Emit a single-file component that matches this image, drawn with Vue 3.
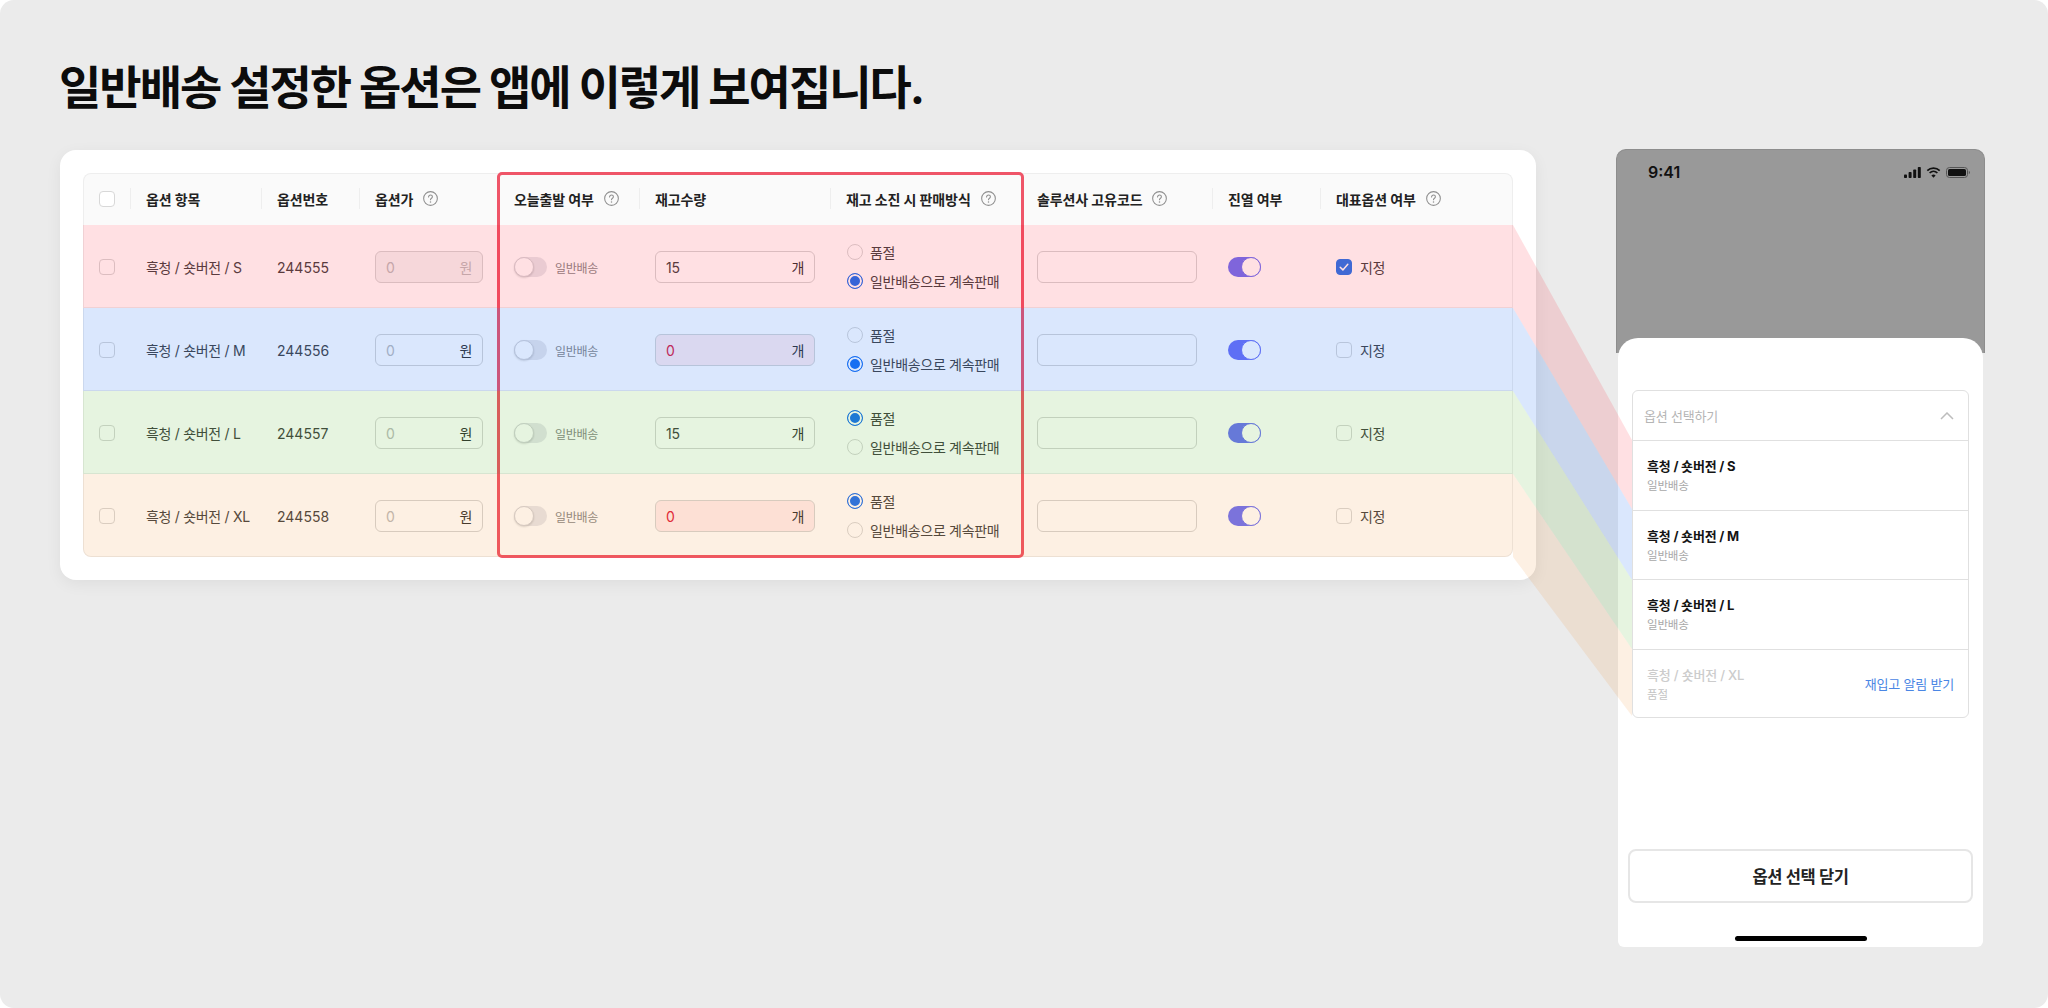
<script setup>
const rows = [
  { tint: "red", name: "흑청 / 숏버전 / S", code: "244555", priceOff: true, stock: "15", soldOut: false, main: true },
  { tint: "blue", name: "흑청 / 숏버전 / M", code: "244556", priceOff: false, stock: "0", soldOut: false, main: false },
  { tint: "green", name: "흑청 / 숏버전 / L", code: "244557", priceOff: false, stock: "15", soldOut: true, main: false },
  { tint: "orange", name: "흑청 / 숏버전 / XL", code: "244558", priceOff: false, stock: "0", soldOut: true, main: false },
]

const columns = [
  { label: "옵션 항목" },
  { label: "옵션번호" },
  { label: "옵션가", help: true },
  { label: "오늘출발 여부", help: true },
  { label: "재고수량" },
  { label: "재고 소진 시 판매방식", help: true },
  { label: "솔루션사 고유코드", help: true },
  { label: "진열 여부" },
  { label: "대표옵션 여부", help: true },
]

const items = [
  { name: "흑청 / 숏버전 / S", note: "일반배송" },
  { name: "흑청 / 숏버전 / M", note: "일반배송" },
  { name: "흑청 / 숏버전 / L", note: "일반배송" },
  { name: "흑청 / 숏버전 / XL", note: "품절", off: true },
]

const bands = [
  { points: "1513,225 1632,440 1632,509 1513,308", fill: "rgba(255,0,25,.12)" },
  { points: "1513,308 1632,509 1632,580 1513,391", fill: "rgba(8,95,242,.15)" },
  { points: "1513,391 1632,580 1632,649 1513,474", fill: "rgba(47,163,0,.12)" },
  { points: "1513,474 1632,649 1632,716 1513,557", fill: "rgba(237,119,0,.11)" },
]
</script>

<template>
  <div class="page">
    <h1 class="title">일반배송 설정한 옵션은 앱에 이렇게 보여집니다.</h1>

    <div class="content">
      <section class="card">
        <div class="table">
          <div class="highlight"></div>

          <div class="grid head">
            <div class="cell check-cell">
              <span class="checkbox"></span>
            </div>
            <div v-for="col in columns" :key="col.label" class="cell head-cell">
              {{ col.label }}
              <svg v-if="col.help" class="help" width="15" height="15" viewBox="0 0 14 14" fill="none">
                <circle cx="7" cy="7" r="6.4" stroke="#8f8f8f" />
                <path d="M5.2 5.5c0-1 .8-1.7 1.8-1.7s1.8.7 1.8 1.6c0 1.300-1.800 1.400-1.800 2.800" stroke="#8f8f8f" stroke-linecap="round" />
                <circle cx="7" cy="10.200" r=".7" fill="#8f8f8f" />
              </svg>
            </div>
          </div>

          <div v-for="row in rows" :key="row.code" class="grid row" :class="row.tint">
            <div class="cell check-cell">
              <span class="checkbox"></span>
            </div>
            <div class="cell">{{ row.name }}</div>
            <div class="cell code">{{ row.code }}</div>
            <div class="cell">
              <div class="field price" :class="{ disabled: row.priceOff }">
                <span class="placeholder">0</span>
                <span class="unit">원</span>
              </div>
            </div>
            <div class="cell">
              <span class="switch"><span class="knob"></span></span>
              <span class="switch-label">일반배송</span>
            </div>
            <div class="cell">
              <div class="field stock" :class="{ empty: row.stock === '0' }">
                <span class="value">{{ row.stock }}</span>
                <span class="unit">개</span>
              </div>
            </div>
            <div class="cell radios">
              <label class="radio-line">
                <span class="radio" :class="{ on: row.soldOut }"></span>품절
              </label>
              <label class="radio-line">
                <span class="radio" :class="{ on: !row.soldOut }"></span>일반배송으로 계속판매
              </label>
            </div>
            <div class="cell">
              <div class="field stock"></div>
            </div>
            <div class="cell">
              <span class="switch on"><span class="knob"></span></span>
            </div>
            <div class="cell">
              <span class="checkbox" :class="{ on: row.main }">
                <svg v-if="row.main" width="12" height="12" viewBox="0 0 12 12" fill="none">
                  <path d="M2.200 6.200 4.900 8.900 9.800 3.300" stroke="#fff" stroke-width="1.500" stroke-linecap="round" stroke-linejoin="round" />
                </svg>
              </span>
              <span class="assign">지정</span>
            </div>
          </div>
        </div>
      </section>

      <section class="phone">
        <div class="dim">
          <div class="status">
            <span class="time">9:41</span>
            <div class="status-icons">
              <svg width="17" height="11" viewBox="0 0 17 11" fill="#111">
                <rect x="0" y="7.500" width="3" height="3.500" rx=".8" />
                <rect x="4.600" y="5" width="3" height="6" rx=".8" />
                <rect x="9.200" y="2.500" width="3" height="8.500" rx=".8" />
                <rect x="13.800" y="0" width="3" height="11" rx=".8" />
              </svg>
              <svg width="15" height="11" viewBox="0 0 14 11" fill="none" stroke="#111" stroke-width="1.700">
                <path d="M.8 3.700a9 9 0 0 1 12.400 0" />
                <path d="M3.100 6a5.700 5.700 0 0 1 7.800 0" />
                <path d="M7 10.800 4.900 8.400a3.200 3.200 0 0 1 4.200 0Z" fill="#111" stroke="none" />
              </svg>
              <svg width="24" height="11" viewBox="0 0 24 11" fill="none">
                <rect x=".5" y=".5" width="21" height="10" rx="3" stroke="#555" />
                <rect x="2" y="2" width="18" height="7" rx="1.600" fill="#111" />
                <path d="M22.800 3.800c.7.300 1.100.9 1.100 1.700s-.4 1.400-1.100 1.700Z" fill="#555" />
              </svg>
            </div>
          </div>
        </div>

        <div class="sheet">
          <div class="select">
            <div class="select-head">
              <span>옵션 선택하기</span>
              <svg width="14" height="8" viewBox="0 0 14 8" fill="none">
                <path d="M1 7 7 1l6 6" stroke="#bdbdbd" stroke-width="1.500" />
              </svg>
            </div>
            <div v-for="item in items" :key="item.name" class="item" :class="{ off: item.off }">
              <div class="item-text">
                <div class="item-name">{{ item.name }}</div>
                <div class="item-note">{{ item.note }}</div>
              </div>
              <a v-if="item.off" class="notify">재입고 알림 받기</a>
            </div>
          </div>
          <button class="close">옵션 선택 닫기</button>
          <div class="home"></div>
        </div>
      </section>
    </div>

    <svg class="bands" width="2048" height="1008" viewBox="0 0 2048 1008">
      <polygon v-for="band in bands" :key="band.points" :points="band.points" :fill="band.fill" />
    </svg>
  </div>
</template>

<style>
html,
body {
  margin: 0;
  background: #fff;
}
</style>

<style scoped>
.page {
  position: relative;
  width: 2048px;
  height: 1008px;
  box-sizing: border-box;
  padding: 54px 60px 0;
  overflow: hidden;
  background: #ebebeb;
  border-radius: 14px;
  color: #222;
  font-family: Inter, "Noto Sans CJK KR", sans-serif;
  font-size: 14px;
  letter-spacing: -0.2px;
}

.title {
  margin: 1px 0 30px -1px;
  height: 64px;
  font-size: 46px;
  line-height: 64px;
  font-weight: 700;
  letter-spacing: -2px;
  color: #0c0c0c;
}

.content {
  display: flex;
  align-items: flex-start;
  gap: 80px;
}

.card {
  width: 1476px;
  height: 430px;
  margin-top: 1px;
  box-sizing: border-box;
  padding: 23px;
  background: #fff;
  border-radius: 16px;
  box-shadow: 0 4px 16px rgba(0, 0, 0, 0.06);
}

.table {
  position: relative;
}

.highlight {
  position: absolute;
  z-index: 1;
  left: 414px;
  top: -1px;
  width: 527px;
  height: 386px;
  box-sizing: border-box;
  border: 3px solid #ef5568;
  border-radius: 5px;
  pointer-events: none;
}

.grid {
  display: grid;
  grid-template-columns: 47px 131px 98px 139px 141px 191px 191px 191px 108px 193px;
}

.head {
  height: 52px;
  padding-bottom: 2px;
  background: #fafafa;
  border: 1px solid #eeeeee;
  border-bottom: none;
  border-radius: 8px 8px 0 0;
  box-sizing: border-box;
  letter-spacing: -0.1px;
}

.row {
  position: relative;
  height: 83px;
  padding-top: 2px;
  background: #fff;
  border-left: 1px solid #eee;
  border-right: 1px solid #eee;
  border-bottom: 1px solid #eeeeee;
  box-sizing: border-box;
  color: #444;
  letter-spacing: -0.3px;
}

.row::after {
  content: "";
  position: absolute;
  z-index: 2;
  inset: 0 -1px -1px;
  pointer-events: none;
}

.row.red::after {
  background: rgba(255, 0, 25, 0.12);
}

.row.blue::after {
  background: rgba(8, 95, 242, 0.15);
}

.row.green::after {
  background: rgba(47, 163, 0, 0.12);
}

.row.orange::after {
  background: rgba(237, 119, 0, 0.11);
  border-radius: 0 0 8px 8px;
}

.row.orange {
  border-radius: 0 0 8px 8px;
}

.cell {
  display: flex;
  align-items: center;
  padding-left: 15px;
  min-width: 0;
  white-space: nowrap;
}

.head-cell {
  position: relative;
  gap: 10px;
  font-weight: 700;
  color: #222;
}

.head .cell::after {
  content: "";
  position: absolute;
  right: 0;
  top: 14px;
  height: 21px;
  width: 1px;
  background: #eeeeee;
}

.head .check-cell {
  position: relative;
}

.head .cell:last-child::after {
  display: none;
}

.help {
  flex: none;
}

.checkbox {
  flex: none;
  display: flex;
  align-items: center;
  justify-content: center;
  width: 16px;
  height: 16px;
  box-sizing: border-box;
  background: #fff;
  border: 1px solid #d8d8d8;
  border-radius: 4px;
}

.checkbox.on {
  background: #2678ee;
  border-color: #2678ee;
}

.code {
  letter-spacing: 0;
}

.field {
  display: flex;
  align-items: center;
  justify-content: space-between;
  height: 32px;
  box-sizing: border-box;
  padding: 0 10px;
  background: #fff;
  border: 1px solid #d6d6d6;
  border-radius: 6px;
}

.price {
  width: 108px;
}

.stock {
  width: 160px;
}

.placeholder {
  color: #bdbdbd;
}

.unit {
  color: #333;
}

.disabled {
  background: #f5f5f5;
}

.disabled .unit {
  color: #bdbdbd;
}

.empty {
  background: #ffeef0;
}

.empty .value {
  color: #e0223f;
}

.switch {
  flex: none;
  position: relative;
  display: block;
  width: 33px;
  height: 20px;
  box-sizing: border-box;
  background: #e8e8ec;
  border-radius: 10px;
}

.switch.on {
  background: #6e73f6;
}

.knob {
  position: absolute;
  left: 0;
  top: 0;
  width: 20px;
  height: 20px;
  box-sizing: border-box;
  background: #fff;
  border: 1px solid #d4d4d8;
  border-radius: 50%;
  box-shadow: 0 1px 2px rgba(0, 0, 0, 0.15);
}

.switch.on .knob {
  left: 13px;
  border-color: #6e73f6;
  box-shadow: none;
}

.switch-label {
  margin-left: 8px;
  font-size: 12px;
  color: #8b8b8b;
  letter-spacing: -0.3px;
}

.radios {
  flex-direction: column;
  align-items: flex-start;
  justify-content: center;
  gap: 8px;
  padding-left: 16px;
  padding-bottom: 2px;
}

.radio-line {
  display: flex;
  align-items: center;
  gap: 7px;
  height: 21px;
  letter-spacing: -0.3px;
}

.radio {
  flex: none;
  width: 16px;
  height: 16px;
  box-sizing: border-box;
  background: #fff;
  border: 1px solid #d8d8d8;
  border-radius: 50%;
}

.radio.on {
  background: #1b72f2;
  border: 1px solid #1b72f2;
  box-shadow: inset 0 0 0 2px #fff;
}

.assign {
  margin-left: 8px;
}

.phone {
  position: relative;
  width: 369px;
}

.dim {
  height: 204px;
  box-sizing: border-box;
  background: #999999;
  border: 1px solid #8d8d8d;
  border-bottom: none;
  border-radius: 10px 10px 0 0;
}

.status {
  display: flex;
  align-items: center;
  justify-content: space-between;
  padding: 12px 14px 0 31px;
}

.time {
  font-size: 16px;
  font-weight: 600;
  letter-spacing: 0;
  color: #111;
}

.status-icons {
  display: flex;
  align-items: center;
  gap: 5px;
}

.sheet {
  position: relative;
  margin: -15px 2px 0;
  height: 609px;
  box-sizing: border-box;
  padding: 52px 14px 0;
  background: #fff;
  border-radius: 20px 20px 6px 6px;
}

.select {
  border: 1px solid #e0e0e0;
  border-radius: 6px;
  height: 328px;
  box-sizing: border-box;
  font-size: 13px;
}

.select-head {
  display: flex;
  align-items: center;
  justify-content: space-between;
  height: 49px;
  box-sizing: border-box;
  padding: 0 14px 0 11px;
  color: #b5b5b5;
}

.item {
  display: flex;
  align-items: center;
  justify-content: space-between;
  height: 69.5px;
  box-sizing: border-box;
  padding: 0 14px;
  border-top: 1px solid #e0e0e0;
}

.item-name {
  font-weight: 700;
  color: #141414;
  line-height: 20px;
}

.item-note {
  margin-top: 2px;
  font-size: 11.5px;
  line-height: 16px;
  color: #a8a8a8;
}

.item.off .item-name {
  font-weight: 500;
  color: #cccccc;
}

.item.off .item-note {
  color: #c4c4c4;
}

.notify {
  color: #4a86e4;
}

.close {
  display: block;
  width: 345px;
  height: 54px;
  margin: 131px 0 0 -4px;
  background: #fff;
  border: 2px solid #e6e6e6;
  border-radius: 8px;
  color: #222;
  font-family: inherit;
  font-size: 16.5px;
  font-weight: 600;
  letter-spacing: -0.4px;
}

.home {
  position: absolute;
  left: 117px;
  bottom: 6px;
  width: 132px;
  height: 5px;
  background: #000;
  border-radius: 3px;
}

.bands {
  position: absolute;
  left: 0;
  top: 0;
  pointer-events: none;
}
</style>
